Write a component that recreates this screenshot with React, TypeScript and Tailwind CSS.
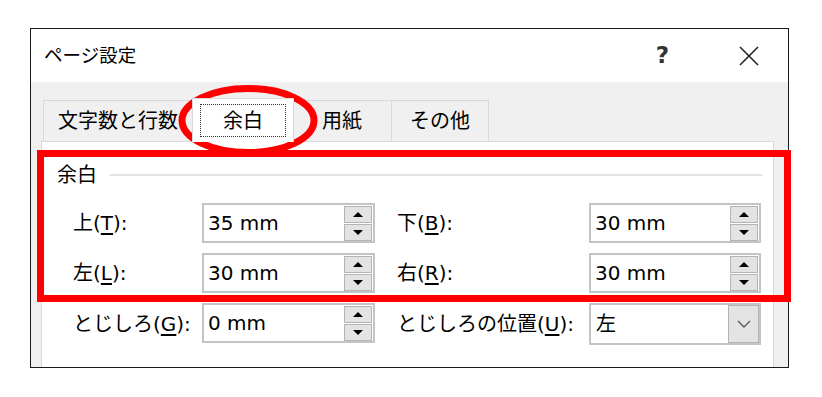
import { ReactNode } from 'react'

const font = "font-[family-name:'DejaVu_Sans','Noto_Sans_CJK_JP',sans-serif]"

function Spinner() {
  return (
    <div className="flex flex-col w-[28px] mr-[1px] gap-px">
      <div className="h-[17px] flex items-center justify-center bg-[#e3e3e3] border border-[#b4b4b4]">
        <div className="w-0 h-0 border-l-[5px] border-r-[5px] border-b-[5px] border-l-transparent border-r-transparent border-b-black" />
      </div>
      <div className="h-[17px] flex items-center justify-center bg-[#e3e3e3] border border-[#b4b4b4]">
        <div className="w-0 h-0 border-l-[5px] border-r-[5px] border-t-[5px] border-l-transparent border-r-transparent border-t-black" />
      </div>
    </div>
  )
}

function NumberBox({ value }: { value: string }) {
  return (
    <div className="h-[40px] border-2 border-[#c4c4c4] bg-white flex items-center">
      <span className="flex-1 pl-[4px] text-[20px] leading-none">{value}</span>
      <Spinner />
    </div>
  )
}

function SelectBox({ value }: { value: string }) {
  return (
    <div className="h-[42px] border-2 border-[#c4c4c4] bg-white flex items-stretch">
      <span className="flex-1 pl-[5px] flex items-center text-[20px]">{value}</span>
      <div className="w-[31px] bg-[#e3e3e3] border border-[#b4b4b4] flex items-center justify-center">
        <svg width="14" height="8" viewBox="0 0 14 8">
          <path d="M1 1 L7 7 L13 1" fill="none" stroke="#5a5a5a" strokeWidth="1.4" />
        </svg>
      </div>
    </div>
  )
}

function Label({ children }: { children: ReactNode }) {
  return <div className="text-[20px] flex items-center whitespace-nowrap">{children}</div>
}

const U = ({ c }: { c: string }) => <span className="underline underline-offset-[3px]">{c}</span>

export default function App() {
  return (
    <div className={`relative w-[822px] h-[397px] bg-white overflow-hidden text-black ${font}`}>
      <div className="pt-[28px] pl-[30px]">
        <div className="w-[759px] h-[340px] border border-[#1a1a1a] flex flex-col">
          {/* Title bar */}
          <div className="h-[53px] bg-white flex items-center pl-[13px]">
            <span className="text-[18.5px] flex-1">ページ設定</span>
            <span className="text-[23px] font-bold text-[#333] mr-[70px]">?</span>
            <svg width="20" height="20" viewBox="0 0 20 20" className="mr-[29px]">
              <path d="M1 1 L19 19 M19 1 L1 19" stroke="#222" strokeWidth="1.6" />
            </svg>
          </div>

          {/* Body */}
          <div className="flex-1 bg-[#f0f0f0] overflow-hidden pt-[15px] pl-[10px] pr-[14px]">
            <div className="flex items-end h-[44px] pl-[2px]">
              <div className="w-[150px] h-[41px] border border-b-0 border-[#d9d9d9] flex items-center justify-center text-[20px]">
                文字数と行数
              </div>
              <div className="relative z-10 w-[102px] h-[44px] -mx-[1px] -mb-px bg-white border border-b-0 border-[#d9d9d9] flex items-center justify-center">
                <div className="w-[86px] h-[33px] border border-dotted border-[#333] flex items-center justify-center text-[20px]">
                  余白
                </div>
              </div>
              <div className="w-[99px] h-[41px] border border-b-0 border-l-0 border-[#d9d9d9] flex items-center justify-center text-[20px]">
                用紙
              </div>
              <div className="w-[97px] h-[41px] border border-b-0 border-l-0 border-[#d9d9d9] flex items-center justify-center text-[20px]">
                その他
              </div>
            </div>

            <div className="h-[260px] bg-white border border-[#d9d9d9] pt-[19px] pl-[15px] pr-[11px]">
              <div className="flex items-center h-[28px]">
                <span className="text-[20px]">余白</span>
                <div className="flex-1 h-[2px] bg-[#e3e3e3] ml-[13px]" />
              </div>

              <div className="mt-[14px] pl-[16px] grid grid-cols-[129px_173px_22px_192px_172px] gap-y-[10px]">
                <Label>上(<U c="T" />):</Label>
                <NumberBox value="35 mm" />
                <div />
                <Label>下(<U c="B" />):</Label>
                <NumberBox value="30 mm" />

                <Label>左(<U c="L" />):</Label>
                <NumberBox value="30 mm" />
                <div />
                <Label>右(<U c="R" />):</Label>
                <NumberBox value="30 mm" />

                <Label>とじしろ(<U c="G" />):</Label>
                <NumberBox value="0 mm" />
                <div />
                <Label>とじしろの位置(<U c="U" />):</Label>
                <SelectBox value="左" />
              </div>
            </div>
          </div>
        </div>
      </div>

      {/* Red highlight annotations */}
      <div className="absolute left-[37px] top-[150px] w-[754px] h-[152px] border-[7px] border-[#ff0000]" />
      <svg className="absolute left-[178px] top-[85px]" width="140" height="71" viewBox="0 0 140 71">
        <ellipse cx="70" cy="35.5" rx="66" ry="32" fill="none" stroke="#ff0000" strokeWidth="7" />
      </svg>
    </div>
  )
}
